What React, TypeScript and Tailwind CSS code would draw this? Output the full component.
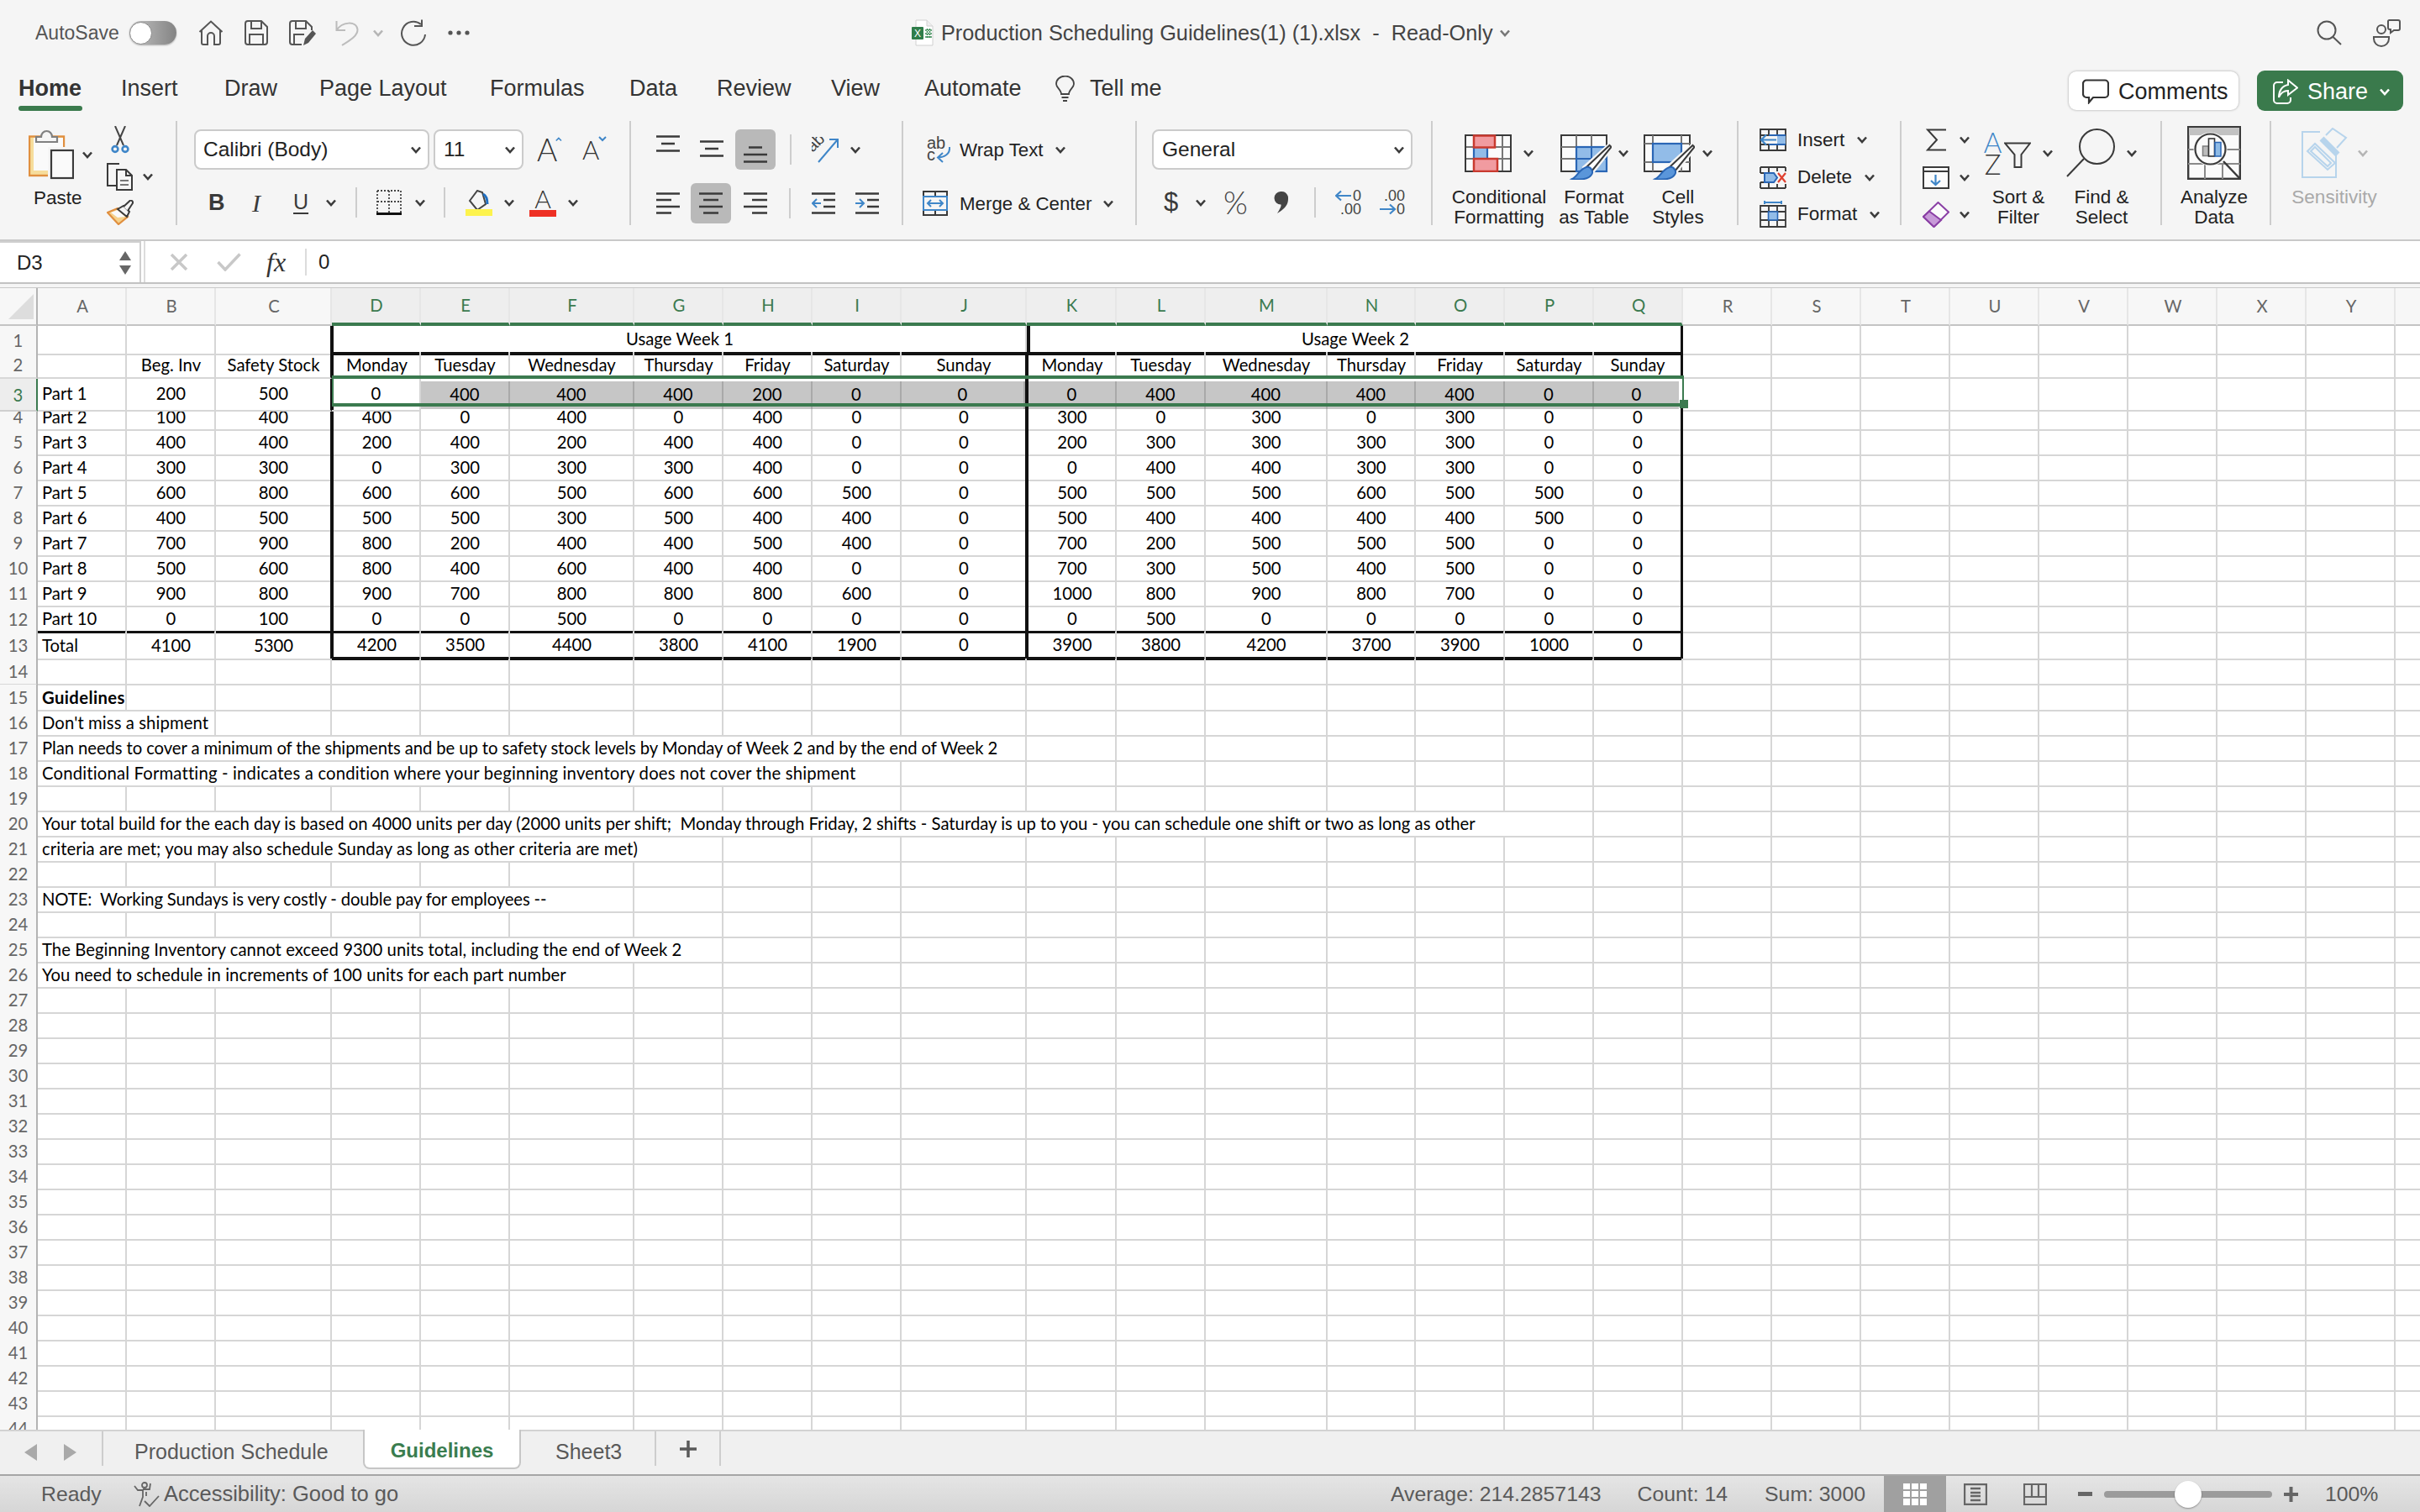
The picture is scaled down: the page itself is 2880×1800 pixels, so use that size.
import React from "react";

type IP = { className?: string };
const BLUE = "#3f86c8";

function Chev({ className = "", color = "#3c3c3c" }: IP & { color?: string }) {
  return (
    <svg className={`shrink-0 ${className}`} width="12" height="9" viewBox="0 0 12 9" fill="none" stroke={color} strokeWidth="2.6">
      <path d="M1 1.5 L6 7 L11 1.5" />
    </svg>
  );
}
function HomeI({ className = "" }: IP) {
  return (
    <svg className={className} width="30" height="31" viewBox="0 0 30 31" fill="none" stroke="#555" strokeWidth="2">
      <path d="M1.5 14 L15 1.5 L28.5 14 M4 12 V27 a2 2 0 0 0 2 2 H11 V19 a4 4 0 0 1 8 0 V29 H24 a2 2 0 0 0 2-2 V12" />
    </svg>
  );
}
function SaveI({ className = "" }: IP) {
  return (
    <svg className={className} width="28" height="30" viewBox="0 0 28 30" fill="none" stroke="#555" strokeWidth="2">
      <path d="M4 1 H20 L27 8 V26 a3 3 0 0 1-3 3 H4 a3 3 0 0 1-3-3 V4 a3 3 0 0 1 3-3 Z M8 1 V10 H20 V1 M6 29 V17 H22 V29" />
    </svg>
  );
}
function SaveAsI({ className = "" }: IP) {
  return (
    <svg className={className} width="32" height="31" viewBox="0 0 32 31" fill="none" stroke="#555" strokeWidth="2">
      <path d="M15 29 H4 a3 3 0 0 1-3-3 V4 a3 3 0 0 1 3-3 H20 L27 8 V12 M8 1 V10 H20 V1 M6 29 V17 H18" />
      <path d="M17 30 L19 22 L28 12 L32 16 L23 27 Z" fill="#555" stroke="none" />
    </svg>
  );
}
function UndoI({ className = "" }: IP) {
  return (
    <svg className={className} width="28" height="32" viewBox="0 0 28 32" fill="none" stroke="#bcbcbc" strokeWidth="2">
      <path d="M1.5 2 V13 H12 M1.5 13 C8 3 25 1 26.5 12 C27 20 16 26 8 31" />
    </svg>
  );
}
function RedoI({ className = "" }: IP) {
  return (
    <svg className={className} width="32" height="32" viewBox="0 0 32 32" fill="none" stroke="#555" strokeWidth="2">
      <path d="M25 6 A14 14 0 1 0 30 18 M26 0.5 V8 H17" />
    </svg>
  );
}
function Dots({ className = "" }: IP) {
  return (
    <svg className={className} width="26" height="6" viewBox="0 0 26 6" fill="#555">
      <circle cx="3" cy="3" r="2.6" />
      <circle cx="13" cy="3" r="2.6" />
      <circle cx="23" cy="3" r="2.6" />
    </svg>
  );
}
function XlIcon({ className = "" }: IP) {
  return (
    <svg className={className} width="26" height="32" viewBox="0 0 26 32">
      <path d="M5 1 H18 L25 8 V31 H5 Z" fill="#fff" stroke="#d0d0d0" />
      <path d="M18 1 V8 H25" fill="#eee" stroke="#d0d0d0" />
      <rect x="0" y="9" width="14" height="15" rx="1" fill="#2f7d4a" />
      <text x="7" y="21" textAnchor="middle" fontSize="12" fill="#fff" fontFamily="Liberation Sans">X</text>
      <path d="M16 13 h8 M16 17 h8 M16 21 h8 M18.5 11 v12 M21.5 11 v12" stroke="#3b8a55" strokeWidth="1.5" strokeDasharray="2 1" fill="none" />
    </svg>
  );
}
function SearchI({ className = "" }: IP) {
  return (
    <svg className={className} width="30" height="30" viewBox="0 0 30 30" fill="none" stroke="#555" strokeWidth="2">
      <circle cx="12" cy="12" r="10.5" />
      <path d="M19.5 20 L29 29" />
    </svg>
  );
}
function PeopleI({ className = "" }: IP) {
  return (
    <svg className={className} width="33" height="33" viewBox="0 0 33 33" fill="none" stroke="#555" strokeWidth="2">
      <path d="M18 2 a1.5 1.5 0 0 1 1.5-1 H30 a2 2 0 0 1 2 2 V11 a2 2 0 0 1-2 2 H25 L21 16 V12 H20 a2 2 0 0 1-2-2 Z" />
      <circle cx="10" cy="12" r="5" />
      <path d="M1 21 H19 V23 a9 9 0 0 1-18 0 Z" />
    </svg>
  );
}
function BulbI({ className = "" }: IP) {
  return (
    <svg className={className} width="25" height="31" viewBox="0 0 25 31" fill="none" stroke="#444" strokeWidth="1.8">
      <path d="M8 22 C8 17 2 14 2 10 A10.5 9.5 0 0 1 23 10 C23 14 17 17 17 22 Z M8.5 26 H16.5 M10 30 H15" />
    </svg>
  );
}
function CommentI({ className = "" }: IP) {
  return (
    <svg className={className} width="32" height="30" viewBox="0 0 32 30" fill="none" stroke="#333" strokeWidth="2.2">
      <path d="M5 1.5 H27 a4 4 0 0 1 4 4 V18 a4 4 0 0 1-4 4 H13 L8 28 V22 H5 a4 4 0 0 1-4-4 V5.5 a4 4 0 0 1 4-4 Z" />
    </svg>
  );
}
function ShareI({ className = "" }: IP) {
  return (
    <svg className={className} width="30" height="30" viewBox="0 0 30 30" fill="none" stroke="#fff" strokeWidth="2">
      <path d="M12 4 H5 a4 4 0 0 0-4 4 V25 a4 4 0 0 0 4 4 H17 a4 4 0 0 0 4-4 V22" />
      <path d="M18 1.5 L29 10.5 L18 19 V14 C12 14 9 17 7 22 C7 14 11 8 18 7 Z" />
    </svg>
  );
}
function PasteI({ className = "" }: IP) {
  return (
    <svg className={className} width="54" height="60" viewBox="0 0 54 60">
      <rect x="1" y="8.5" width="41" height="46.5" fill="#f6dd9c" stroke="#e08f3f" strokeWidth="2.4" />
      <rect x="6" y="10" width="35" height="39" fill="#fafafa" />
      <path d="M9 15 V9 H15 a6.5 7 0 0 1 13 0 H34 V15 Z" fill="#f5f5f5" stroke="#808080" strokeWidth="2.2" />
      <rect x="23" y="21" width="32" height="40" fill="#f5f5f5" />
      <rect x="27" y="25" width="26" height="33" fill="#fafafa" stroke="#3a3a3a" strokeWidth="2.2" />
    </svg>
  );
}
function ScissorsI({ className = "" }: IP) {
  return (
    <svg className={className} width="22" height="33" viewBox="0 0 22 33" fill="none">
      <path d="M5 0 L15 23 M17 0 L7 23" stroke="#444" strokeWidth="2" />
      <circle cx="5" cy="27.5" r="3.4" stroke={BLUE} strokeWidth="2.6" fill="#f5f5f5" />
      <circle cx="17" cy="27.5" r="3.4" stroke={BLUE} strokeWidth="2.6" fill="#f5f5f5" />
    </svg>
  );
}
function CopyI({ className = "" }: IP) {
  return (
    <svg className={className} width="31" height="33" viewBox="0 0 31 33" fill="none" stroke="#3a3a3a" strokeWidth="2">
      <path d="M15 1 H1 V27 H11" />
      <path d="M12 8 H23 L30 15 V32 H12 Z M23 8 V15 H30" fill="#f5f5f5" />
      <path d="M16 21 H26 M16 26 H26" stroke="#777" />
    </svg>
  );
}
function PainterI({ className = "" }: IP) {
  return (
    <svg className={className} width="32" height="30" viewBox="0 0 32 30" fill="none">
      <path d="M1 15 L13 10 L25 20 L14 29 Z" fill="#f6d28c" stroke="#e08f3f" strokeWidth="2.2" />
      <path d="M5 15 L13 12 L22 20 L13 21 Z" fill="#fafafa" />
      <path d="M13 11 L20 7 L27 14 L24 20 Z" fill="#f5f5f5" stroke="#3a3a3a" strokeWidth="2" />
      <path d="M20 8 L27 1.5 a2.3 2.3 0 0 1 3.5 3 L25 13" fill="#f5f5f5" stroke="#3a3a3a" strokeWidth="2" />
    </svg>
  );
}
function BorderI({ className = "" }: IP) {
  return (
    <svg className={className} width="30" height="30" viewBox="0 0 30 30" fill="none">
      <path d="M1 1 H29 V27 M1 1 V27 M15 1 V27 M1 14 H29" stroke="#444" strokeWidth="1.8" strokeDasharray="2 2" />
      <path d="M0 28.5 H30" stroke="#111" strokeWidth="3" />
    </svg>
  );
}
function BucketI({ className = "" }: IP) {
  return (
    <svg className={className} width="32" height="31" viewBox="0 0 32 31" fill="none">
      <path d="M5 13 L14 1 L20 3 L24 17 L14 24 Z" fill="#f5f5f5" stroke="#444" strokeWidth="2" />
      <path d="M21 5 C25 7 26 12 26 17" stroke="#1f6fc2" strokeWidth="3" />
      <rect x="0" y="23" width="32" height="8" fill="#fdf34d" />
    </svg>
  );
}
function Lines({ d, className = "", w = 28, h = 26 }: IP & { d: string; w?: number; h?: number }) {
  return (
    <svg className={`shrink-0 ${className}`} width={w} height={h} viewBox={`0 0 ${w} ${h}`} fill="none" stroke="#3a3a3a" strokeWidth="2.4">
      <path d={d} />
    </svg>
  );
}
function OrientI({ className = "" }: IP) {
  return (
    <svg className={className} width="33" height="31" viewBox="0 0 33 31" fill="none">
      <text x="1" y="19" fontSize="20" fill="#444" fontFamily="Liberation Sans" transform="rotate(-45 1 19)">ab</text>
      <path d="M8 30 L31 3 M21 3 H31 V13" stroke={BLUE} strokeWidth="2" />
    </svg>
  );
}
function IndentI({ out = false, className = "" }: IP & { out?: boolean }) {
  return (
    <svg className={className} width="28" height="26" viewBox="0 0 28 26" fill="none">
      <path d="M0 1.5 H28 M0 24.5 H28 M14 9 H28 M14 17 H28" stroke="#3a3a3a" strokeWidth="2.4" />
      {out ? <path d="M11 13 H1 M6 8 L1 13 L6 18" stroke={BLUE} strokeWidth="2" /> : <path d="M0 13 H10 M5 8 L10 13 L5 18" stroke={BLUE} strokeWidth="2" />}
    </svg>
  );
}
function WrapI({ className = "" }: IP) {
  return (
    <svg className={className} width="30" height="32" viewBox="0 0 30 32" fill="none">
      <text x="0" y="15" fontSize="20" fill="#444" fontFamily="Liberation Sans">ab</text>
      <text x="0" y="29" fontSize="20" fill="#444" fontFamily="Liberation Sans">c</text>
      <path d="M27 13 C28 21 21 25.5 13 25.5 M19 20 L13 25.5 L19 31" stroke={BLUE} strokeWidth="2" />
    </svg>
  );
}
function MergeI({ className = "" }: IP) {
  return (
    <svg className={className} width="30" height="30" viewBox="0 0 30 30" fill="none">
      <path d="M1 1 H29 V29 H1 Z M15 1 V7 M15 23 V29" stroke="#3a3a3a" strokeWidth="2" />
      <rect x="1" y="7" width="28" height="16" fill="#f5f5f5" stroke={BLUE} strokeWidth="2" />
      <path d="M6 15 H24 M10 11 L6 15 L10 19 M20 11 L24 15 L20 19" stroke={BLUE} strokeWidth="2" />
    </svg>
  );
}
function CommaI({ className = "" }: IP) {
  return (
    <svg className={className} width="17" height="26" viewBox="0 0 17 26" fill="#444">
      <path d="M8 0 a8 8 0 0 1 9 9 C17 17 11 22 4 26 C7 21 9 18 8.5 15.5 a7.7 7.7 0 1 1 -0.5-15.5 Z" />
    </svg>
  );
}
function DecI({ inc = false, className = "" }: IP & { inc?: boolean }) {
  return (
    <svg className={className} width="32" height="32" viewBox="0 0 32 32" fill="none">
      {inc ? (
        <>
          <text x="31" y="14" textAnchor="end" fontSize="18" fill="#444" fontFamily="Liberation Sans">0</text>
          <text x="31" y="30" textAnchor="end" fontSize="18" fill="#444" fontFamily="Liberation Sans">.00</text>
          <path d="M1 8 H19 M7 2.5 L1 8 L7 13.5" stroke={BLUE} strokeWidth="2.2" />
        </>
      ) : (
        <>
          <text x="31" y="14" textAnchor="end" fontSize="18" fill="#444" fontFamily="Liberation Sans">.00</text>
          <text x="31" y="30" textAnchor="end" fontSize="18" fill="#444" fontFamily="Liberation Sans">0</text>
          <path d="M1 24 H19 M13 18.5 L19 24 L13 29.5" stroke={BLUE} strokeWidth="2.2" />
        </>
      )}
    </svg>
  );
}
function CondI({ className = "" }: IP) {
  return (
    <svg className={className} width="56" height="45" viewBox="0 0 56 45" fill="none">
      <rect x="1" y="1" width="54" height="43" fill="#fbfbfb" />
      <path d="M45 1 V44 M27 15 V29 M1 15 H55 M1 29 H55" stroke="#777" strokeWidth="2" />
      <rect x="1" y="1" width="54" height="43" stroke="#3a3a3a" strokeWidth="2" />
      <rect x="11" y="16" width="16" height="13" fill="#92bce8" />
      <path d="M11 15 V29 M27 15 V29" stroke="#2a66b5" strokeWidth="2.2" />
      <rect x="11" y="1.5" width="25" height="14" fill="#f19ba0" stroke="#c93a2f" strokeWidth="2.5" />
      <rect x="11" y="29" width="28" height="15" fill="#f19ba0" stroke="#c93a2f" strokeWidth="2.5" />
    </svg>
  );
}
function Brush() {
  return (
    <>
      <path d="M59 13 L60.5 15 L37 45 L30 39 Z" fill="#fff" stroke="#f5f5f5" strokeWidth="6" />
      <path d="M58.5 13 L60.5 15 L37 44 L31 39 Z" fill="#fff" stroke="#3a3a3a" strokeWidth="2" />
      <path d="M31 39 C36 38 40 44 37 48 C33 54 22 54 14 53 C20 50 22 42 31 39 Z" fill="#5a96da" stroke="#2a66b5" strokeWidth="2" />
    </>
  );
}
function TableI({ className = "" }: IP) {
  return (
    <svg className={className} width="61" height="54" viewBox="0 0 61 54" fill="none">
      <rect x="1" y="1" width="54" height="43" fill="#fbfbfb" stroke="#3a3a3a" strokeWidth="2" />
      <path d="M19 1 V15 M37 1 V15 M1 15 H19 M1 29 H19" stroke="#777" strokeWidth="2" />
      <rect x="19" y="15" width="36" height="29" fill="#92bce8" stroke="#2a66b5" strokeWidth="2.2" />
      <path d="M37 15 V44 M19 29 H55" stroke="#2a66b5" strokeWidth="2" />
      <Brush />
    </svg>
  );
}
function StylesI({ className = "" }: IP) {
  return (
    <svg className={className} width="61" height="54" viewBox="0 0 61 54" fill="none">
      <rect x="1" y="1" width="54" height="43" fill="#fbfbfb" stroke="#3a3a3a" strokeWidth="2" />
      <path d="M11 1 V44 M45 1 V44 M1 11 H55 M1 33 H55" stroke="#777" strokeWidth="2" />
      <rect x="11" y="11" width="34" height="22" fill="#92bce8" stroke="#2a66b5" strokeWidth="2.2" />
      <Brush />
    </svg>
  );
}
function InsertI({ className = "" }: IP) {
  return (
    <svg className={className} width="32" height="27" viewBox="0 0 32 27" fill="none">
      <path d="M1 1 H31 V26 H1 Z M11 1 V8 M21 1 V8 M11 19 V26 M21 19 V26 M1 8 H11 M1 19 H11" stroke="#3a3a3a" strokeWidth="1.9" />
      <rect x="21" y="8" width="10" height="11" fill="#92bce8" />
      <path d="M11 8 H31 M11 19 H31" stroke="#2a66b5" strokeWidth="2" />
      <path d="M20 13.5 H2 M8 7.5 L2 13.5 L8 19.5" stroke={BLUE} strokeWidth="2.2" />
    </svg>
  );
}
function DeleteI({ className = "" }: IP) {
  return (
    <svg className={className} width="32" height="27" viewBox="0 0 32 27" fill="none">
      <path d="M1 1 H31 M1 26 H31 M1 1 V8 M1 19 V26 M11 1 V8 M21 1 V6 M11 19 V26 M21 21 V26 M31 1 V6 M31 21 V26 M1 8 H6 M1 19 H6" stroke="#3a3a3a" strokeWidth="1.9" />
      <path d="M6 8 H17 L21 13.5 L17 19 H6 Z" fill="#92bce8" stroke="#2a66b5" strokeWidth="2" />
      <path d="M22 8 L31 19 M31 8 L22 19" stroke="#e0402f" strokeWidth="2.2" />
    </svg>
  );
}
function FormatI({ className = "" }: IP) {
  return (
    <svg className={className} width="32" height="32" viewBox="0 0 32 32" fill="none">
      <path d="M1 6 H31 V31 H1 Z M11 6 V31 M21 6 V31 M1 13 H31 M1 23 H31" stroke="#3a3a3a" strokeWidth="1.8" />
      <rect x="10.5" y="13" width="11" height="10" fill="#92bce8" stroke="#2a66b5" strokeWidth="1.6" />
      <path d="M6 2 H26 M6 0 V4 M26 0 V4" stroke={BLUE} strokeWidth="2" />
    </svg>
  );
}
function SigmaI({ className = "" }: IP) {
  return (
    <svg className={className} width="25" height="27" viewBox="0 0 25 27" fill="none" stroke="#3a3a3a" strokeWidth="2">
      <path d="M24 1.5 H2 L13 13.5 L2 25.5 H24" />
    </svg>
  );
}
function FillI({ className = "" }: IP) {
  return (
    <svg className={className} width="32" height="27" viewBox="0 0 32 27" fill="none">
      <rect x="1" y="1" width="30" height="25" fill="#fbfbfb" stroke="#3a3a3a" strokeWidth="2" />
      <path d="M1 6 H31" stroke="#3a3a3a" strokeWidth="2" />
      <path d="M15.5 10 V22 M10 17 L15.5 22 L21 17" stroke={BLUE} strokeWidth="2.2" />
    </svg>
  );
}
function EraserI({ className = "" }: IP) {
  return (
    <svg className={className} width="32" height="31" viewBox="0 0 32 31" fill="none">
      <path d="M18.5 1 L31 12.5 L13.5 30 L1 18 Z" fill="#fbfbfb" stroke="#8a3fa5" strokeWidth="2" />
      <path d="M8 11.5 L22 22 L13.5 30 L1 18 Z" fill="#c79ad8" stroke="#8a3fa5" strokeWidth="2" />
    </svg>
  );
}
function FunnelI({ className = "" }: IP) {
  return (
    <svg className={className} width="32" height="31" viewBox="0 0 32 31" fill="none" stroke="#3a3a3a" strokeWidth="2">
      <path d="M1 1.5 H31 L20.5 15 V30 H12.5 V15 Z" />
    </svg>
  );
}
function FindI({ className = "" }: IP) {
  return (
    <svg className={className} width="58" height="59" viewBox="0 0 58 59" fill="none" stroke="#3a3a3a" strokeWidth="2">
      <circle cx="36.5" cy="21.5" r="20.5" />
      <path d="M21 36 L1 57" />
    </svg>
  );
}
function AnalyzeI({ className = "" }: IP) {
  return (
    <svg className={className} width="64" height="64" viewBox="0 0 64 64" fill="none">
      <rect x="1.2" y="1.2" width="61.6" height="61.6" fill="#fbfbfb" stroke="#3a3a3a" strokeWidth="2.4" />
      <rect x="2" y="2" width="60" height="9" fill="#c2c2c2" />
      <path d="M1 45 H63 M21 45 V63 M42 45 V63 M1 28 H10 M46 28 H63" stroke="#8a8a8a" strokeWidth="2" />
      <circle cx="27.5" cy="27.5" r="20" fill="#f5f5f5" />
      <circle cx="27.5" cy="27.5" r="18" fill="#fbfbfb" stroke="#3a3a3a" strokeWidth="2.2" />
      <rect x="18.5" y="24" width="7" height="11.5" fill="#bcbcbc" stroke="#7d7d7d" strokeWidth="1.5" />
      <rect x="25.5" y="15" width="7" height="21" fill="#fbfbfb" stroke="#333" strokeWidth="1.6" />
      <rect x="33" y="19.5" width="7" height="16.5" fill="#8fbbe6" stroke="#2a66b5" strokeWidth="1.5" />
      <path d="M43 42 L63 63" stroke="#3a3a3a" strokeWidth="2.5" />
    </svg>
  );
}
function SensI({ className = "" }: IP) {
  return (
    <svg className={className} width="55" height="60" viewBox="0 0 55 60" fill="none" stroke="#b7d4ec" strokeWidth="2">
      <path d="M22 5 H1 V59 H41 V30" />
      <path d="M7 28 L16 19 L40 42 L31 50 Z M11 28 L16 23 L35 42 L31 46 Z" />
      <path d="M24 13 L43 32" strokeWidth="7" />
      <path d="M29 9 L37 1 L53 12 L42 24" />
    </svg>
  );
}
function TriL({ className = "" }: IP) {
  return (
    <svg className={className} width="15" height="20" viewBox="0 0 15 20" fill="#a9a9a9">
      <path d="M15 0 V20 L0 10 Z" />
    </svg>
  );
}
function TriR({ className = "" }: IP) {
  return (
    <svg className={className} width="15" height="20" viewBox="0 0 15 20" fill="#a9a9a9">
      <path d="M0 0 V20 L15 10 Z" />
    </svg>
  );
}
function AccessI({ className = "" }: IP) {
  return (
    <svg className={className} width="32" height="30" viewBox="0 0 32 30" fill="none" stroke="#666" strokeWidth="1.8">
      <circle cx="14" cy="4" r="3" />
      <path d="M2 5 L6 10 H12 V18 L8 29 M21 2 L20 9 H12 M16 12 V17" />
      <path d="M14 23 L20 29 L31 17" />
    </svg>
  );
}

function Sep({ className = "" }: IP) {
  return <div className={`w-[2px] bg-[#cdcdcd] shrink-0 ${className}`} />;
}
function GroupSep() {
  return <Sep className="h-[124px]" />;
}
function Large({ w, label, icon, color = "text-[#222]", chevColor, chevMl = "ml-[14px]" }: { w: string; label: string[]; icon: React.ReactNode; color?: string; chevColor?: string; chevMl?: string }) {
  return (
    <div className={`flex flex-col items-center shrink-0 ${w}`}>
      <div className="h-[76px] flex items-center justify-center">
        {icon}
        <Chev className={chevMl} color={chevColor} />
      </div>
      <div className={`mt-[3px] text-center text-[22.5px] leading-[24px] whitespace-nowrap ${color}`}>
        {label.map((l) => (
          <div key={l}>{l}</div>
        ))}
      </div>
    </div>
  );
}

const GRID = "grid grid-cols-[45px_106px_106px_138px_106px_106px_148px_106px_106px_106px_149px_107px_106px_145px_105px_106px_106px_106px_106px_106px_106px_106px_106px_106px_106px_106px_106px]";
const LETTERS = "ABCDEFGHIJKLMNOPQRSTUVWXYZ".split("");

const DATA: (string | number)[][] = [
  ["Part 1", 200, 500, 0, 400, 400, 400, 200, 0, 0, 0, 400, 400, 400, 400, 0, 0],
  ["Part 2", 100, 400, 400, 0, 400, 0, 400, 0, 0, 300, 0, 300, 0, 300, 0, 0],
  ["Part 3", 400, 400, 200, 400, 200, 400, 400, 0, 0, 200, 300, 300, 300, 300, 0, 0],
  ["Part 4", 300, 300, 0, 300, 300, 300, 400, 0, 0, 0, 400, 400, 300, 300, 0, 0],
  ["Part 5", 600, 800, 600, 600, 500, 600, 600, 500, 0, 500, 500, 500, 600, 500, 500, 0],
  ["Part 6", 400, 500, 500, 500, 300, 500, 400, 400, 0, 500, 400, 400, 400, 400, 500, 0],
  ["Part 7", 700, 900, 800, 200, 400, 400, 500, 400, 0, 700, 200, 500, 500, 500, 0, 0],
  ["Part 8", 500, 600, 800, 400, 600, 400, 400, 0, 0, 700, 300, 500, 400, 500, 0, 0],
  ["Part 9", 900, 800, 900, 700, 800, 800, 800, 600, 0, 1000, 800, 900, 800, 700, 0, 0],
  ["Part 10", 0, 100, 0, 0, 500, 0, 0, 0, 0, 0, 500, 0, 0, 0, 0, 0],
  ["Total", 4100, 5300, 4200, 3500, 4400, 3800, 4100, 1900, 0, 3900, 3800, 4200, 3700, 3900, 1000, 0],
];
const DAYS = ["Monday", "Tuesday", "Wednesday", "Thursday", "Friday", "Saturday", "Sunday"];
const NOTES: Record<number, [string, number, string]> = {
  15: ["Guidelines", 1, "font-bold tracking-[0.4px]"],
  16: ["Don't miss a shipment", 2, "tracking-[0.09px]"],
  17: ["Plan needs to cover a minimum of the shipments and be up to safety stock levels by Monday of Week 2 and by the end of Week 2", 10, "tracking-[-0.09px]"],
  18: ["Conditional Formatting - indicates a condition where your beginning inventory does not cover the shipment", 9, "tracking-[0.175px]"],
  20: ["Your total build for the each day is based on 4000 units per day (2000 units per shift;  Monday through Friday, 2 shifts - Saturday is up to you - you can schedule one shift or two as long as other", 16, ""],
  21: ["criteria are met; you may also schedule Sunday as long as other criteria are met)", 7, "tracking-[0.07px]"],
  23: ["NOTE:  Working Sundays is very costly - double pay for employees --", 6, "tracking-[-0.137px]"],
  25: ["The Beginning Inventory cannot exceed 9300 units total, including the end of Week 2", 7, "tracking-[0.044px]"],
  26: ["You need to schedule in increments of 100 units for each part number", 6, "tracking-[0.054px]"],
};

function heightClass(r: number) {
  if (r === 1) return "h-[31px]";
  if (r === 2) return "h-[32px]";
  if (r === 12) return "h-[31px]";
  if (r === 13) return "h-[32px]";
  if (r === 14) return "h-[31px]";
  return "h-[30px]";
}

function RowHead({ r }: { r: number }) {
  const sel = r === 3;
  return (
    <div className={`flex items-center justify-center border-b-2 border-r-[2px] ${sel ? "bg-[#ededed] text-[#3b7a4f] border-b-[#cfcfcf] border-r-[#3b7a4f]" : "bg-[#f7f7f7] text-[#666] border-b-[#d8d8d8] border-r-[#b4b4b4]"}`}>
      {r}
    </div>
  );
}

function cellBorders(r: number, c: number) {
  const inTable = r <= 13 && c >= 3 && c <= 16;
  let b = "border-r-2 border-b-2 border-[#d6d6d6]";
  if (r <= 13) {
    if (c === 2 || c === 9) b += " border-r-[#111]";
    if (c === 3 || c === 10) b += " border-l-2 border-l-[#111]";
    if (c === 16) b += " border-r-[3px] border-r-[#111]";
  }
  if (r === 1 && inTable) b += " border-b-[4px] border-b-[#111]";
  if (r === 12 && c <= 16) b += " border-b-[3px] border-b-[#111]";
  if (r === 13 && inTable) b += " border-b-[4px] border-b-[#111]";
  return b;
}

function Cell({ r, c, children, align = "center", span = 1, extra = "" }: { r: number; c: number; children?: React.ReactNode; align?: "center" | "left"; span?: number; extra?: string }) {
  return (
    <div
      className={`flex items-center whitespace-pre min-w-0 ${cellBorders(r, c)} ${align === "center" ? "justify-center pl-[1px]" : "pl-[5px]"} ${extra}`}
      style={span > 1 ? { gridColumn: `span ${span}` } : undefined}
    >
      {children}
    </div>
  );
}

function SheetRow({ r }: { r: number }) {
  const cells: React.ReactNode[] = [];
  if (r === 1) {
    for (let c = 0; c < 3; c++) cells.push(<Cell key={c} r={1} c={c} />);
    cells.push(
      <Cell key="w1" r={1} c={3} span={7} extra="border-r-0 pb-[1px]">
        Usage Week 1
      </Cell>
    );
    cells.push(
      <div key="w2" className="flex items-center justify-center pb-[1px] border-l-[4px] border-l-[#111] border-r-[3px] border-r-[#111] border-b-[4px] border-b-[#111]" style={{ gridColumn: "span 7" }}>
        Usage Week 2
      </div>
    );
    for (let c = 17; c < 26; c++) cells.push(<Cell key={c} r={1} c={c} />);
  } else if (r === 2) {
    const head = ["", "Beg. Inv", "Safety Stock", ...DAYS, ...DAYS];
    for (let c = 0; c < 26; c++) {
      cells.push(
        <Cell key={c} r={2} c={c}>
          {head[c]}
        </Cell>
      );
    }
  } else if (r === 3) {
    const d = DATA[0];
    for (let c = 0; c < 26; c++) {
      if (c >= 4 && c <= 16) {
        cells.push(
          <div key={c} className={`py-[3px] ${c === 9 ? "border-r-2 border-r-[#111]" : ""} ${c === 10 ? "border-l-2 border-l-[#111]" : ""}`}>
            <div className={`h-full flex items-center justify-center pb-[3px] bg-[#c6c6c6] ${c === 16 ? "mr-[5px]" : "border-r-2 border-r-[#a9a9a9]"}`}>{d[c]}</div>
          </div>
        );
      } else {
        cells.push(
          <Cell key={c} r={3} c={c === 3 ? 99 : c} align={c === 0 ? "left" : "center"} extra="pb-[3px]">
            {d[c]}
          </Cell>
        );
      }
    }
  } else if (r <= 13) {
    const d = DATA[r - 3];
    for (let c = 0; c < 26; c++) {
      cells.push(
        <Cell key={c} r={r} c={c} align={c === 0 ? "left" : "center"}>
          {d[c]}
        </Cell>
      );
    }
  } else {
    const n = NOTES[r];
    let start = 0;
    if (n) {
      cells.push(
        <Cell key="n" r={r} c={0} align="left" extra={n[2]} span={n[1]}>
          {n[0]}
        </Cell>
      );
      start = n[1];
    }
    for (let c = start; c < 26; c++) cells.push(<Cell key={c} r={r} c={c} />);
  }
  return (
    <div className={`${GRID} ${heightClass(r)} ${r === 3 ? "relative" : ""}`}>
      <RowHead r={r} />
      {cells}
      {r === 3 && (
        <div className="absolute left-[395px] top-[-4px] w-[1609px] h-[37px] border-y-4 border-x-2 border-[#3b7a4f] pointer-events-none">
          <div className="absolute right-[-7px] bottom-[-6px] w-[10px] h-[10px] bg-[#3b7a4f]" />
        </div>
      )}
    </div>
  );
}

export default function App() {
  const rows = Array.from({ length: 44 }, (_, i) => i + 1);
  return (
    <div className="w-[2880px] h-[1800px] overflow-hidden flex flex-col bg-[#f5f5f5] font-['Liberation_Sans',Arial,sans-serif] text-[#222]">
      {/* Title bar */}
      <div className="h-[78px] shrink-0 flex items-center">
        <span className="ml-[42px] w-[112px] text-[23px] text-[#555]">AutoSave</span>
        <div className="w-[56px] h-[28px] rounded-full bg-gradient-to-r from-[#c4c4c4] to-[#848484] shadow-[0_1px_2px_rgba(0,0,0,0.3)] flex items-center">
          <div className="w-[27px] h-[27px] rounded-full bg-white border border-[#888]" />
        </div>
        <HomeI className="ml-[26px]" />
        <SaveI className="ml-[25px]" />
        <SaveAsI className="ml-[25px]" />
        <UndoI className="ml-[23px]" />
        <Chev className="ml-[17px]" color="#b5b5b5" />
        <RedoI className="ml-[20px]" />
        <Dots className="ml-[25px]" />
        <XlIcon className="ml-[526px]" />
        <span className="ml-[9px] pt-[2px] text-[25.3px] text-[#444] whitespace-pre">Production Scheduling Guidelines(1) (1).xlsx  -  Read-Only</span>
        <Chev className="ml-[8px]" color="#777" />
        <SearchI className="ml-auto" />
        <PeopleI className="ml-[37px] mr-[23px]" />
      </div>

      {/* Tabs */}
      <div className="h-[66px] shrink-0 flex items-start text-[27px] text-[#333]">
        <div className="ml-[22px] w-[122px] flex flex-col items-start">
          <div className="h-[48px] pt-[6px] leading-[42px] font-bold">Home</div>
          <div className="w-[76px] h-[6px] rounded-full bg-[#3a7a4c]" />
        </div>
        <div className="w-[123px] h-[48px] pt-[6px] leading-[42px]">Insert</div>
        <div className="w-[113px] h-[48px] pt-[6px] leading-[42px]">Draw</div>
        <div className="w-[203px] h-[48px] pt-[6px] leading-[42px]">Page Layout</div>
        <div className="w-[166px] h-[48px] pt-[6px] leading-[42px]">Formulas</div>
        <div className="w-[104px] h-[48px] pt-[6px] leading-[42px]">Data</div>
        <div className="w-[136px] h-[48px] pt-[6px] leading-[42px]">Review</div>
        <div className="w-[111px] h-[48px] pt-[6px] leading-[42px]">View</div>
        <div className="w-[155px] h-[48px] pt-[6px] leading-[42px]">Automate</div>
        <BulbI className="mt-[12px]" />
        <div className="ml-[17px] h-[48px] pt-[6px] leading-[42px]">Tell me</div>
        <div className="ml-auto mt-[7px] w-[202px] h-[46px] pt-[2px] rounded-[9px] bg-white shadow-[0_0_3px_rgba(0,0,0,0.35)] flex items-center">
          <CommentI className="ml-[16px]" />
          <span className="ml-[11px] text-[27px] text-[#222]">Comments</span>
        </div>
        <div className="ml-[22px] mr-[20px] mt-[6px] w-[174px] h-[48px] pt-[2px] rounded-[9px] bg-[#3a7a4c] flex items-center text-white">
          <ShareI className="ml-[19px]" />
          <span className="ml-[11px] text-[27px]">Share</span>
          <Chev className="ml-[14px]" color="#fff" />
        </div>
      </div>

      {/* Ribbon */}
      <div className="h-[141px] shrink-0 flex items-start">
        {/* Clipboard */}
        <div className="w-[209px] shrink-0 flex pl-[34px]">
          <div className="w-[91px] flex flex-col">
            <div className="mt-[10px] flex items-center">
              <PasteI />
              <Chev className="ml-[10px]" />
            </div>
            <span className="mt-[9px] ml-[6px] text-[22.5px] leading-[26px]">Paste</span>
          </div>
          <div className="flex flex-col">
            <ScissorsI className="mt-[6px] ml-[7px]" />
            <div className="mt-[11px] ml-[2px] flex items-center">
              <CopyI />
              <Chev className="ml-[12px]" />
            </div>
            <PainterI className="mt-[11px] ml-[2px]" />
          </div>
        </div>
        <GroupSep />

        {/* Font */}
        <div className="w-[538px] shrink-0 pl-[20px]">
          <div className="mt-[10px] h-[48px] flex items-center">
            <div className="w-[280px] h-[48px] rounded-[8px] bg-white border-2 border-[#cbcbcb] flex items-center justify-between pl-[9px] pr-[8px] text-[24.5px] text-[#222]">
              <span>Calibri (Body)</span>
              <Chev />
            </div>
            <div className="ml-[5px] w-[107px] h-[48px] rounded-[8px] bg-white border-2 border-[#cbcbcb] flex items-center justify-between pl-[10px] pr-[8px] text-[24.5px] text-[#222]">
              <span>11</span>
              <Chev />
            </div>
            <div className="ml-[16px] w-[30px] flex items-start">
              <span className="font-['Lato'] font-light text-[37px] leading-[38px] text-[#333]">A</span>
              <svg className="mt-[3px] -ml-[2px]" width="10" height="7" viewBox="0 0 10 7" fill="none" stroke={BLUE} strokeWidth="2"><path d="M1 6 L5 2 L9 6" /></svg>
            </div>
            <div className="ml-[24px] flex items-start">
              <span className="font-['Lato'] font-light text-[31px] leading-[38px] text-[#333]">A</span>
              <svg className="mt-[3px] -ml-[1px]" width="10" height="7" viewBox="0 0 10 7" fill="none" stroke={BLUE} strokeWidth="2"><path d="M1 1 L5 5 L9 1" /></svg>
            </div>
          </div>
          <div className="mt-[19px] h-[40px] flex items-center text-[#3a3a3a]">
            <span className="ml-[17px] w-[52px] text-[27px] font-bold">B</span>
            <span className="w-[49px] text-[30px] italic font-['Liberation_Serif']">I</span>
            <span className="w-[34px] text-[25px] underline underline-offset-4">U</span>
            <Chev className="ml-[5px]" />
            <Sep className="ml-[23px] h-[36px]" />
            <BorderI className="ml-[23px]" />
            <Chev className="ml-[16px]" />
            <Sep className="ml-[22px] h-[36px]" />
            <BucketI className="ml-[24px]" />
            <Chev className="ml-[14px]" />
            <div className="ml-[18px] w-[32px] flex flex-col items-center">
              <span className="font-['Lato'] font-light text-[30px] leading-[25px] text-[#333]">A</span>
              <div className="w-[32px] h-[8px] bg-[#ee3024] mt-[1px]" />
            </div>
            <Chev className="ml-[14px]" />
          </div>
        </div>
        <GroupSep />

        {/* Alignment */}
        <div className="w-[322px] shrink-0">
          <div className="mt-[10px] h-[48px] flex items-center">
            <Lines className="ml-[30px] mb-[14px]" w={28} h={20} d="M0 1.5 H28 M6 10 H22 M0 18.5 H28" />
            <Lines className="ml-[24px] mb-[2px]" w={28} h={20} d="M0 1.5 H28 M6 10 H22 M0 18.5 H28" />
            <div className="ml-[14px] w-[48px] h-[48px] rounded-[6px] bg-[#b9b9b9] flex items-end justify-center pb-[8px]">
              <Lines w={28} h={20} d="M6 1.5 H22 M0 10 H28 M0 18.5 H28" />
            </div>
            <Sep className="ml-[17px] h-[36px]" />
            <OrientI className="ml-[24px]" />
            <Chev className="ml-[13px]" />
          </div>
          <div className="mt-[16px] h-[48px] flex items-center">
            <Lines className="ml-[30px]" d="M0 1.5 H28 M0 9 H18 M0 17 H28 M0 24.5 H18" />
            <div className="ml-[13px] w-[48px] h-[48px] rounded-[6px] bg-[#b9b9b9] flex items-center justify-center">
              <Lines d="M0 1.5 H28 M5 9 H23 M0 17 H28 M5 24.5 H23" />
            </div>
            <Lines className="ml-[15px]" d="M0 1.5 H28 M10 9 H28 M0 17 H28 M10 24.5 H28" />
            <Sep className="ml-[26px] h-[36px]" />
            <IndentI out className="ml-[25px]" />
            <IndentI className="ml-[24px]" />
          </div>
        </div>
        <GroupSep />

        {/* Wrap / merge */}
        <div className="w-[276px] shrink-0 text-[22.3px]">
          <div className="mt-[10px] h-[48px] flex items-center">
            <WrapI className="ml-[28px]" />
            <span className="ml-[9px] mt-[2px]">Wrap Text</span>
            <Chev className="ml-[14px]" />
          </div>
          <div className="mt-[16px] h-[48px] flex items-center">
            <MergeI className="ml-[23px]" />
            <span className="ml-[14px] mt-[2px]">Merge &amp; Center</span>
            <Chev className="ml-[14px]" />
          </div>
        </div>
        <GroupSep />

        {/* Number */}
        <div className="w-[350px] shrink-0 pl-[18px]">
          <div className="mt-[10px] w-[310px] h-[48px] rounded-[8px] bg-white border-2 border-[#cbcbcb] flex items-center justify-between pl-[10px] pr-[8px] text-[24.5px] text-[#222]">
            <span>General</span>
            <Chev />
          </div>
          <div className="mt-[19px] h-[40px] flex items-center">
            <span className="ml-[14px] text-[31px] w-[18px] text-[#3a3a3a]">$</span>
            <Chev className="ml-[20px]" />
            <span className="ml-[21px] w-[38px] text-[37px] text-[#444] font-['Lato'] font-light">%</span>
            <CommaI className="ml-[22px]" />
            <Sep className="ml-[31px] h-[36px]" />
            <DecI inc className="ml-[23px]" />
            <DecI className="ml-[20px]" />
          </div>
        </div>
        <GroupSep />

        {/* Styles */}
        <div className="w-[362px] shrink-0 pl-[10px] flex">
          <Large w="w-[138px]" label={["Conditional", "Formatting"]} icon={<CondI />} />
          <Large w="w-[88px]" label={["Format", "as Table"]} icon={<TableI className="mt-[10px]" />} chevMl="ml-[8px]" />
          <Large w="w-[112px]" label={["Cell", "Styles"]} icon={<StylesI className="mt-[10px]" />} chevMl="ml-[9px]" />
        </div>
        <GroupSep />

        {/* Cells */}
        <div className="w-[192px] shrink-0 pl-[25px] text-[22.5px]">
          <div className="h-[45px] flex items-center">
            <InsertI />
            <span className="ml-[13px]">Insert</span>
            <Chev className="ml-[15px]" />
          </div>
          <div className="h-[44px] flex items-center">
            <DeleteI />
            <span className="ml-[13px]">Delete</span>
            <Chev className="ml-[15px]" />
          </div>
          <div className="h-[44px] flex items-center">
            <FormatI />
            <span className="ml-[13px]">Format</span>
            <Chev className="ml-[15px]" />
          </div>
        </div>
        <GroupSep />

        {/* Editing */}
        <div className="w-[308px] shrink-0 pl-[25px] flex">
          <div className="w-[62px] shrink-0">
            <div className="h-[45px] flex items-center">
              <SigmaI className="ml-[4px]" />
              <Chev className="ml-[15px]" />
            </div>
            <div className="h-[44px] flex items-center">
              <FillI />
              <Chev className="ml-[12px]" />
            </div>
            <div className="h-[44px] flex items-center">
              <EraserI />
              <Chev className="ml-[12px]" />
            </div>
          </div>
          <Large
            w="w-[104px]"
            label={["Sort &", "Filter"]}
            icon={
              <div className="flex items-start">
                <div className="flex flex-col items-center font-['Lato'] font-light text-[33px] leading-[26px]">
                  <span className="text-[#3f86c8]">A</span>
                  <span className="text-[#3a3a3a]">Z</span>
                </div>
                <FunnelI className="ml-[3px] mt-[13px]" />
              </div>
            }
          />
          <Large w="w-[94px]" label={["Find &", "Select"]} icon={<FindI />} />
        </div>
        <GroupSep />

        {/* Analyze */}
        <div className="w-[124px] shrink-0 flex flex-col items-center">
          <div className="h-[76px] flex items-center">
            <AnalyzeI />
          </div>
          <div className="mt-[3px] text-center text-[22.5px] leading-[24px]">
            <div>Analyze</div>
            <div>Data</div>
          </div>
        </div>
        <div className="w-[4px] shrink-0" />
        <GroupSep />

        {/* Sensitivity */}
        <div className="w-[150px] shrink-0">
          <Large w="w-[150px]" label={["Sensitivity"]} icon={<SensI />} color="text-[#a9a9a9]" chevColor="#b5b5b5" chevMl="ml-[12px]" />
        </div>
      </div>

      {/* Formula bar */}
      <div className="h-[53px] shrink-0 flex items-center bg-white border-t-[2px] border-b-[2px] border-t-[#c9c9c9] border-b-[#c2c2c2]">
        <div className="w-[168px] h-full border-2 border-t-[#cfcfcf] border-l-0 border-b-0 border-r-[#cfcfcf] flex items-center pl-[20px] pr-[10px] justify-between text-[24px] text-[#222]">
          <span>D3</span>
          <div className="flex flex-col gap-[6px]">
            <svg width="14" height="11" viewBox="0 0 14 11" fill="#666"><path d="M7 0 L14 11 H0 Z" /></svg>
            <svg width="14" height="11" viewBox="0 0 14 11" fill="#666"><path d="M7 11 L14 0 H0 Z" /></svg>
          </div>
        </div>
        <div className="ml-[3px] w-[2px] h-full bg-[#dcdcdc]" />
        <svg className="ml-[29px]" width="22" height="20" viewBox="0 0 22 20" fill="none" stroke="#c8c8c8" strokeWidth="3.5"><path d="M2 1 L20 19 M20 1 L2 19" /></svg>
        <svg className="ml-[34px]" width="29" height="22" viewBox="0 0 29 22" fill="none" stroke="#c8c8c8" strokeWidth="3.5"><path d="M1.5 11 L10 20 L27.5 1.5" /></svg>
        <span className="ml-[30px] w-[31px] text-[32px] italic font-['Liberation_Serif'] text-[#333]">fx</span>
        <div className="ml-[15px] w-[2px] h-[32px] bg-[#dcdcdc]" />
        <span className="ml-[14px] text-[24px] text-[#222]">0</span>
      </div>

      {/* gap */}
      <div className="h-[5px] shrink-0 bg-[#f5f5f5] border-b border-[#c8c8c8]" />

      {/* Sheet */}
      <div className="flex-1 min-h-0 overflow-hidden bg-white font-['Lato',sans-serif] text-[20.3px] text-[#000]">
        <div className={`${GRID} h-[45px] text-[#666]`}>
          <div className="bg-[#f7f7f7] border-r-2 border-r-[#b4b4b4] border-b-2 border-b-[#c4c4c4] flex items-center justify-end pr-[3px]">
            <svg width="30" height="30" viewBox="0 0 30 30" fill="#dddddd"><path d="M30 0 V30 H0 Z" /></svg>
          </div>
          {LETTERS.map((l, i) => {
            const sel = i >= 3 && i <= 16;
            return (
              <div key={l} className={`flex items-center justify-center pl-[2px] border-r-2 border-r-[#e6e6e6] ${sel ? "bg-[#eeeeee] text-[#3b7a4f] border-b-4 border-b-[#3b7a4f]" : "bg-[#f7f7f7] border-b-2 border-b-[#c4c4c4]"}`}>
                {l}
              </div>
            );
          })}
        </div>
        {rows.map((r) => (
          <SheetRow key={r} r={r} />
        ))}
      </div>

      {/* Sheet tabs */}
      <div className="h-[53px] shrink-0 flex items-start bg-[#f0f0f0] border-t-2 border-[#d2d2d2] text-[25px] text-[#595959]">
        <TriL className="ml-[29px] mt-[15px]" />
        <TriR className="ml-[32px] mt-[15px]" />
        <Sep className="ml-[30px] h-[41px]" />
        <span className="ml-[37px] w-[232px] leading-[48px] whitespace-nowrap">Production Schedule</span>
        <div className="ml-[40px] -mt-[2px] w-[188px] h-[47px] pt-[5px] flex items-center justify-center bg-white rounded-b-[8px] border-x-2 border-b-2 border-[#c6c6c6] text-[24px] font-bold text-[#3a7d4f]">Guidelines</div>
        <span className="ml-[41px] w-[77px] leading-[48px]">Sheet3</span>
        <Sep className="ml-[41px] h-[41px]" />
        <svg className="ml-[28px] mt-[11px]" width="20" height="20" viewBox="0 0 20 20" fill="none" stroke="#595959" strokeWidth="3.5"><path d="M10 0 V20 M0 10 H20" /></svg>
        <Sep className="ml-[27px] h-[41px]" />
      </div>

      {/* Status bar */}
      <div className="h-[45px] shrink-0 flex items-center bg-gradient-to-b from-[#e5e5e5] to-[#d6d6d6] border-t-2 border-[#a6a6a6] text-[24.8px] text-[#5a5a5a]">
        <span className="ml-[49px] w-[109px]">Ready</span>
        <AccessI />
        <span className="ml-[5px] text-[25.5px]">Accessibility: Good to go</span>
        <span className="ml-auto">Average: 214.2857143</span>
        <span className="ml-[43px]">Count: 14</span>
        <span className="ml-[44px]">Sum: 3000</span>
        <div className="ml-[22px] w-[74px] h-full bg-[#a0a0a0] flex items-center justify-center">
          <svg width="28" height="26" viewBox="0 0 28 26" fill="#fff"><path d="M0 0 H8 V7 H0 Z M10 0 H18 V7 H10 Z M20 0 H28 V7 H20 Z M0 9 H8 V16 H0 Z M10 9 H18 V16 H10 Z M20 9 H28 V16 H20 Z M0 18 H8 V26 H0 Z M10 18 H18 V26 H10 Z M20 18 H28 V26 H20 Z" /></svg>
        </div>
        <svg className="ml-[21px]" width="28" height="26" viewBox="0 0 28 26" fill="none" stroke="#666" strokeWidth="2.4"><path d="M1 1 H27 V25 H1 Z M8 6 H20 M8 11 H20 M8 15 H20 M8 20 H20" /></svg>
        <svg className="ml-[43px]" width="28" height="26" viewBox="0 0 28 26" fill="none" stroke="#666" strokeWidth="2.2"><path d="M1 1 H27 V25 H1 Z M1 16 H27 M10 1 V16 M18 1 V16" /></svg>
        <div className="ml-[37px] w-[17px] h-[5px] bg-[#666]" />
        <div className="ml-[14px] relative w-[200px] h-[8px] rounded-full bg-[#9b9b9b]">
          <div className="absolute left-[84px] top-[-12px] w-[32px] h-[32px] rounded-full bg-white shadow-[0_1px_2px_rgba(0,0,0,0.35)]" />
        </div>
        <svg className="ml-[14px]" width="17" height="18" viewBox="0 0 17 18" fill="none" stroke="#666" strokeWidth="4"><path d="M8.5 0 V18 M0 9 H17" /></svg>
        <span className="ml-[32px] mr-[49px] w-[64px]">100%</span>
      </div>
    </div>
  );
}
